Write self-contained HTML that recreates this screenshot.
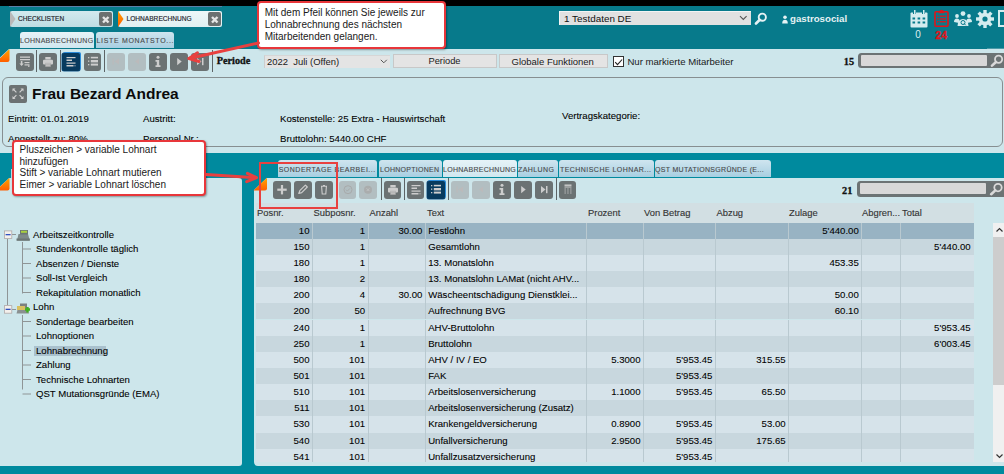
<!DOCTYPE html>
<html><head><meta charset="utf-8">
<style>
*{box-sizing:border-box;margin:0;padding:0}
html,body{width:1004px;height:474px;overflow:hidden;background:#cde6eb;font-family:"Liberation Sans",sans-serif;color:#111}
.a{position:absolute}
.t{position:absolute;white-space:nowrap;line-height:1}
.tab{position:absolute;top:11px;height:16px;background:linear-gradient(#d3eaee,#bedde3);border-radius:2px}
.subtab{position:absolute;height:16.5px;border-radius:3px 3px 0 0;background:linear-gradient(#cfe5ef,#a8cfe1);color:#4a4a4a;-webkit-text-stroke:.12px #4a4a4a;font-size:7px;letter-spacing:.3px;line-height:16px;padding-top:1px;white-space:nowrap;overflow:hidden}
.btn{position:absolute;width:17.7px;height:17.6px;border-radius:3px;background:#6b7273}
.btn.dis{background:#b2bec1}
.btn.act{background:#073a5e;box-shadow:1px -1px 0 0 #2a8ad8,0 0 0 .5px #1a5a90;border-radius:2px}
.sep{position:absolute;width:1.2px;background:#5d6466}
.th{position:absolute;top:207.2px;font-size:9.4px;color:#333;-webkit-text-stroke:.12px #333}
.row{position:absolute;left:256px;width:717.6px}
.vl{position:absolute;top:0;bottom:0;width:1px;background:#b9c9d0}
.c{position:absolute;top:0;line-height:16.15px;font-size:9.6px;white-space:nowrap;color:#000;-webkit-text-stroke:.08px #000}
.ti{font-size:9.6px;color:#000;-webkit-text-stroke:.08px #000}
.hi{-webkit-text-stroke:.08px #000;color:#000}
.cls{position:absolute;top:12px;width:13.5px;height:13.5px;border-radius:2px;background:#6b7070}
</style></head><body>

<div class="a" style="left:0;top:0;width:1004px;height:5.5px;background:#000"></div>
<div class="a" style="left:0;top:5.5px;width:1004px;height:43.5px;background:#077a8b"></div>
<div class="a" style="left:9px;top:5.5px;width:213px;height:1.5px;background:#5a7fa8"></div>

<!-- top tabs -->
<div class="tab" style="left:10px;width:103px"></div>
<svg class="a" style="left:10px;top:11px" width="6" height="16"><path d="M0 0 L5.5 8 L0 16z" fill="#b9b9b9"/></svg>
<div class="t" style="left:18px;top:16.3px;font-size:6.6px;color:#1e1e2a;-webkit-text-stroke:.15px #1e1e2a">CHECKLISTEN</div>
<div class="cls" style="left:98.7px"><svg width="13.5" height="13.5"><path d="M4 4l5.5 5.5M9.5 4L4 9.5" stroke="#e6e6e6" stroke-width="2.4"/></svg></div>
<div class="tab" style="left:118.4px;width:103.6px;background:linear-gradient(#eef7f8,#e0eff2)"></div>
<svg class="a" style="left:118.4px;top:11px" width="6" height="16"><defs><linearGradient id="ot" x1="0" y1="0" x2="0" y2="1"><stop offset="0" stop-color="#ffa000"/><stop offset="1" stop-color="#ff6000"/></linearGradient></defs><path d="M0 0 L5.5 8 L0 16z" fill="url(#ot)"/></svg>
<div class="t" style="left:126.5px;top:16.3px;font-size:6.6px;color:#1e1e2a;-webkit-text-stroke:.15px #1e1e2a">LOHNABRECHNUNG</div>
<div class="cls" style="left:207.8px"><svg width="13.5" height="13.5"><path d="M4 4l5.5 5.5M9.5 4L4 9.5" stroke="#e6e6e6" stroke-width="2.4"/></svg></div>

<!-- sub tabs -->
<div class="subtab" style="left:20px;top:31.6px;width:74.2px;background:linear-gradient(#e6f3f8,#d0e7ef)">LOHNABRECHNUNG</div>
<div class="subtab" style="left:96px;top:31.6px;width:78px;letter-spacing:.67px;padding-left:.5px">LISTE MONATSTO...</div>

<!-- top right -->
<div class="a" style="left:559.3px;top:10.7px;width:191.7px;height:14.5px;background:#e1e1e1;border-left:1px solid #f4f4f4;border-top:1px solid #f4f4f4"></div>
<div class="t" style="left:564px;top:14.2px;font-size:9.9px;color:#111">1 Testdaten DE</div>
<svg class="a" style="left:739px;top:15px" width="9" height="6"><path d="M1 1.2l3.3 3.3 3.3-3.3" fill="none" stroke="#555" stroke-width="1.1"/></svg>
<svg class="a" style="left:754px;top:11.5px" width="14" height="13"><circle cx="8.3" cy="5.2" r="3.6" fill="none" stroke="#e6f2f4" stroke-width="1.9"/><path d="M5.8 7.8L2 11.5" stroke="#e6f2f4" stroke-width="2.6" stroke-linecap="round"/></svg>
<svg class="a" style="left:781.5px;top:14.5px" width="6" height="9"><circle cx="3" cy="2.2" r="1.8" fill="#e6f2f4"/><path d="M0.2 8.5 Q0.2 4.8 3 4.8 Q5.8 4.8 5.8 8.5z" fill="#e6f2f4"/></svg>
<div class="t" style="left:790px;top:14.2px;font-size:9.7px;font-weight:bold;color:#e6f2f4">gastrosocial</div>
<!-- calendar -->
<svg class="a" style="left:909.5px;top:9.5px" width="18" height="18"><g fill="#d4ecef"><rect x="0.5" y="2.5" width="17" height="15" rx="1"/></g><g fill="#077a8b"><rect x="3" y="0" width="3" height="4"/><rect x="12" y="0" width="3" height="4"/><rect x="2.5" y="7.5" width="2.6" height="2"/><rect x="7.6" y="7.5" width="2.6" height="2"/><rect x="12.6" y="7.5" width="2.6" height="2"/><rect x="2.5" y="11.5" width="2.6" height="2"/><rect x="7.6" y="11.5" width="2.6" height="2"/><rect x="12.6" y="11.5" width="2.6" height="2"/></g><g fill="#d4ecef"><rect x="4" y="0" width="1.5" height="4.5"/><rect x="13" y="0" width="1.5" height="4.5"/></g></svg>
<div class="t" style="left:915.3px;top:30.2px;font-size:10px;color:#dceef0">0</div>
<!-- clipboard -->
<svg class="a" style="left:934px;top:9.3px" width="15" height="18"><g fill="none" stroke="#e0141a" stroke-width="1.6"><rect x="1" y="2.8" width="13" height="14.4" rx="1"/></g><path d="M4.5 4.2 L5.5 1.5 H9.5 L10.5 4.2z" fill="#e0141a"/><circle cx="7.5" cy="2" r="1.2" fill="#e0141a"/><g fill="#e0141a"><rect x="3" y="6.5" width="1.5" height="1.3"/><rect x="5.5" y="6.5" width="6.5" height="1.3"/><rect x="3" y="9.3" width="1.5" height="1.3"/><rect x="5.5" y="9.3" width="6.5" height="1.3"/><rect x="3" y="12.1" width="1.5" height="1.3"/><rect x="5.5" y="12.1" width="6.5" height="1.3"/></g></svg>
<div class="t" style="left:935.3px;top:29.8px;font-size:10.5px;font-weight:bold;color:#e0141a;-webkit-text-stroke:.3px #e0141a">24</div>
<!-- group -->
<svg class="a" style="left:953.5px;top:11px" width="18" height="16"><g fill="#d4ecef"><circle cx="9" cy="2.6" r="2.4"/><circle cx="3" cy="5" r="1.9"/><circle cx="15" cy="5" r="1.9"/><path d="M0 11 Q0 7.5 3 7.5 Q5 7.5 5.5 9 L5 12z"/><path d="M18 11 Q18 7.5 15 7.5 Q13 7.5 12.5 9 L13 12z"/><path d="M3.5 15 Q4 8 9 8 Q14 8 14.5 15z"/></g><circle cx="9" cy="11.5" r="2" fill="none" stroke="#077a8b" stroke-width="1"/><path d="M10.3 12.8l1.5 1.5" stroke="#077a8b" stroke-width="1"/></svg>
<!-- gear -->
<svg class="a" style="left:976px;top:9.5px" width="18" height="18" viewBox="0 0 18 18"><g fill="#d4ecef"><circle cx="9" cy="9" r="6.3"/><g transform="rotate(0 9 9)"><rect x="7.3" y="0" width="3.4" height="4"/><rect x="7.3" y="14" width="3.4" height="4"/></g><g transform="rotate(45 9 9)"><rect x="7.3" y="0" width="3.4" height="4"/><rect x="7.3" y="14" width="3.4" height="4"/></g><g transform="rotate(90 9 9)"><rect x="7.3" y="0" width="3.4" height="4"/><rect x="7.3" y="14" width="3.4" height="4"/></g><g transform="rotate(135 9 9)"><rect x="7.3" y="0" width="3.4" height="4"/><rect x="7.3" y="14" width="3.4" height="4"/></g></g><circle cx="9" cy="9" r="2.6" fill="#077a8b"/></svg>
<!-- exit partial -->
<svg class="a" style="left:997.5px;top:10px" width="7" height="17"><rect x="1" y="1" width="10" height="15" fill="none" stroke="#d4ecef" stroke-width="2"/></svg>
<!-- light area -->
<div class="a" style="left:0;top:49px;width:1004px;height:425px;background:#cde6eb"></div>
<div class="a" style="left:987px;top:48px;width:17px;height:1px;background:#4a9aa8"></div>
<svg class="a" style="left:0;top:48px" width="12" height="16" viewBox="0 48 12 16">
<defs><linearGradient id="og" x1="0" y1="0" x2="0" y2="1"><stop offset="0" stop-color="#ffa600"/><stop offset="1" stop-color="#ff5e00"/></linearGradient></defs>
<path d="M0 48.5 H9.5 L0 57.5z" fill="#077a8b"/>
<path d="M-4 62 L9.5 49 L9.5 60 Q9.5 62 7.5 62 Z" fill="url(#og)"/>
</svg>

<div class="btn " style="left:16px;top:53px"><svg width="18" height="17" viewBox="0 0 18 17" style="position:absolute;left:0;top:0"><g fill="#cdcdcd"><rect x="4" y="3.5" width="10" height="1.3"/><rect x="4" y="6" width="10" height="1.3"/><rect x="4.8" y="8" width="1.6" height="3"/><path d="M3.4 10.5h4.4L5.6 13z"/><rect x="8.5" y="9" width="5" height="1.2"/><rect x="8.5" y="11.3" width="5" height="1.2"/><rect x="12" y="12.5" width="1.5" height="1.3"/></g></svg></div>
<div class="sep" style="left:36.2px;top:49.5px;height:22px"></div>
<div class="btn " style="left:39px;top:53px"><svg width="18" height="17" viewBox="0 0 18 17" style="position:absolute;left:0;top:0"><g fill="#cdcdcd"><rect x="6.3" y="4" width="5.4" height="2.5"/><rect x="4" y="6.8" width="10" height="4.6" rx="1"/><rect x="6.3" y="9.8" width="5.4" height="4" fill="#b0b0b0"/><rect x="6.9" y="10.6" width="4.2" height=".6" fill="#cdcdcd"/><rect x="6.9" y="11.9" width="4.2" height=".6" fill="#cdcdcd"/></g></svg></div>
<div class="sep" style="left:59.5px;top:49.5px;height:22px"></div>
<div class="btn act" style="left:62px;top:53px"><svg width="18" height="17" viewBox="0 0 18 17" style="position:absolute;left:0;top:0"><g fill="#cdcdcd"><rect x="4.5" y="4" width="9" height="1.2"/><rect x="4.5" y="6.5" width="5.5" height="1.5"/><rect x="4.5" y="9.5" width="9" height="1.2"/><rect x="4.5" y="12" width="7" height="1.5"/><rect x="12.5" y="12.3" width="1" height="1"/></g></svg></div>
<div class="btn " style="left:83.5px;top:53px"><svg width="18" height="17" viewBox="0 0 18 17" style="position:absolute;left:0;top:0"><g fill="#cdcdcd"><rect x="4" y="4" width="1.3" height="1.3"/><rect x="6.8" y="3.8" width="7.2" height="1.6"/><rect x="4" y="7.5" width="1.3" height="1.3"/><rect x="6.8" y="7" width="7.2" height="2.4"/><rect x="4" y="11" width="1.3" height="1.3"/><rect x="6.8" y="10.6" width="7.2" height="2"/></g></svg></div>
<div class="sep" style="left:104px;top:49.5px;height:22px"></div>
<div class="btn dis" style="left:107px;top:53px"><svg width="18" height="17" viewBox="0 0 18 17" style="position:absolute;left:0;top:0"><g fill="#c2b8b8" opacity=".6"><rect x="5.5" y="5.5" width="1.2" height="6"/><path d="M12 5.5v6L7.5 8.5z"/></g></svg></div>
<div class="btn dis" style="left:128px;top:53px"><svg width="18" height="17" viewBox="0 0 18 17" style="position:absolute;left:0;top:0"><g fill="#c2b8b8" opacity=".6"><path d="M11 5.5v6L7 8.5z"/></g></svg></div>
<div class="btn " style="left:149px;top:53px"><svg width="18" height="17" viewBox="0 0 18 17" style="position:absolute;left:0;top:0"><g fill="#cdcdcd"><circle cx="9" cy="4.3" r="1.5"/><path d="M6.5 7h3.7v5.2h1.3v1.8h-5v-1.8h1.3v-3.4h-1.3z"/></g></svg></div>
<div class="btn " style="left:170px;top:53px"><svg width="18" height="17" viewBox="0 0 18 17" style="position:absolute;left:0;top:0"><g fill="#cdcdcd"><path d="M7.2 5v7.2l4.5-3.6z"/></g></svg></div>
<div class="btn " style="left:191px;top:53px"><svg width="18" height="17" viewBox="0 0 18 17" style="position:absolute;left:0;top:0"><g fill="#cdcdcd"><path d="M6 5v7.2l4.5-3.6z"/><rect x="11" y="5" width="1.5" height="7.2"/></g></svg></div>
<div class="sep" style="left:211.5px;top:49.5px;height:22.5px"></div>
<div class="t" style="left:216.8px;top:56.3px;font-size:10.2px;font-weight:bold;font-family:'Liberation Serif',serif;color:#111;-webkit-text-stroke:.3px #111">Periode</div>

<div class="a" style="left:263.5px;top:54.5px;width:126.3px;height:13.7px;background:#e4e4e4;border-left:1px solid #cdcdcd;border-top:1px solid #d6d6d6"></div>
<div class="t" style="left:267px;top:57.3px;font-size:9.45px;color:#1a1a1a">2022&nbsp; Juli (Offen)</div>
<svg class="a" style="left:380px;top:59px" width="8" height="5"><path d="M.8 .8l3 3 3-3" fill="none" stroke="#555" stroke-width="1"/></svg>
<div class="a" style="left:393px;top:53.6px;width:103.5px;height:14.6px;background:#e4e4e4;border:1px solid #c8c8c8"></div>
<div class="t" style="left:428.5px;top:57.3px;font-size:9.3px;color:#1a1a1a">Periode</div>
<div class="a" style="left:498.5px;top:53.6px;width:109.4px;height:14.6px;background:#e4e4e4;border:1px solid #c8c8c8"></div>
<div class="t" style="left:511.5px;top:57.3px;font-size:9.5px;color:#1a1a1a">Globale Funktionen</div>
<div class="a" style="left:612.7px;top:56.3px;width:11.2px;height:10.5px;background:#fff;border:1px solid #333"></div>
<svg class="a" style="left:613px;top:56.5px" width="11" height="10"><path d="M2.2 5.2l2.3 2.5 4.6-5.2" fill="none" stroke="#222" stroke-width="1.1"/></svg>
<div class="t" style="left:627.4px;top:57.3px;font-size:9.6px;color:#1a1a1a">Nur markierte Mitarbeiter</div>
<div class="t" style="left:843.8px;top:57.2px;font-size:10.3px;font-weight:bold;font-family:'Liberation Serif',serif;color:#111;-webkit-text-stroke:.3px #111">15</div>
<div class="a" style="left:857.7px;top:52.8px;width:150px;height:15.6px;background:#6c7374;border-radius:3.5px"></div>
<div class="a" style="left:861px;top:55.3px;width:126px;height:10.6px;background:#d8d8d8;border-radius:1px"></div>
<svg class="a" style="left:989px;top:54px" width="15" height="13"><circle cx="9.6" cy="5.3" r="3.6" fill="none" stroke="#d9d9d9" stroke-width="1.8"/><path d="M7 8L3 11.6" stroke="#d9d9d9" stroke-width="2.6" stroke-linecap="round"/></svg>

<!-- header panel -->
<div class="a" style="left:2px;top:76.9px;width:1000.5px;height:70.5px;border:1px solid #878f91;border-radius:6px"></div>
<div class="a" style="left:9px;top:85px;width:18px;height:17.5px;background:#6c7273;border-radius:2px"></div>
<svg class="a" style="left:9px;top:85px" width="18" height="18"><g stroke="#d0d0d0" stroke-width="1.2" fill="none"><path d="M4.2 4.2l3.2 3.2M13.8 4.2l-3.2 3.2M4.2 13.3l3.2-3.2M13.8 13.3l-3.2-3.2"/></g><g fill="#d0d0d0"><path d="M3.5 3.5h3l-3 3z"/><path d="M14.5 3.5h-3l3 3z"/><path d="M3.5 14h3l-3-3z"/><path d="M14.5 14h-3l3-3z"/></g></svg>
<div class="t" style="left:32px;top:86.4px;font-size:15.5px;font-weight:bold;color:#0a0a0a">Frau Bezard Andrea</div>
<div class="t hi" style="left:8px;top:113.8px;font-size:9.65px">Eintritt: 01.01.2019</div>
<div class="t hi" style="left:143px;top:113.8px;font-size:9.65px">Austritt:</div>
<div class="t hi" style="left:280px;top:113.8px;font-size:9.65px">Kostenstelle: 25 Extra - Hauswirtschaft</div>
<div class="t hi" style="left:562px;top:110.6px;font-size:9.65px">Vertragskategorie:</div>
<div class="t hi" style="left:8px;top:133.6px;font-size:9.65px">Angestellt zu: 80%</div>
<div class="t hi" style="left:143px;top:133.6px;font-size:9.65px">Personal Nr.:</div>
<div class="t hi" style="left:280px;top:133.8px;font-size:9.65px">Bruttolohn: 5440.00 CHF</div>

<!-- lower teal -->
<div class="a" style="left:0;top:152.8px;width:1004px;height:322px;background:#008a9e"></div>
<!-- left tab stub -->
<div class="a" style="left:11px;top:169.3px;width:20px;height:8.5px;background:#b9dbe6"></div>
<!-- left tree panel -->
<div class="a" style="left:0;top:178px;width:242.3px;height:288.3px;background:#cde6eb;border-radius:0 3px 3px 0"></div>
<!-- right panel -->
<div class="a" style="left:253.5px;top:177.7px;width:751px;height:288.8px;background:#cde6eb;border-radius:0 0 0 4px"></div>
<svg class="a" style="left:0;top:176px" width="270" height="16" viewBox="0 176 270 16">
<defs><linearGradient id="og3" x1="0" y1="0" x2="0" y2="1"><stop offset="0" stop-color="#ffa600"/><stop offset="1" stop-color="#ff5e00"/></linearGradient></defs>
<path d="M0 177.7 H9.5 L0 186.5z" fill="#008a9e"/>
<path d="M-4 190.5 L9.5 177.7 L9.5 188.5 Q9.5 190.5 7.5 190.5 Z" fill="url(#og3)"/>
<path d="M253.5 177.7 H267 L253.5 190.5z" fill="#008a9e"/>
<path d="M253.5 190.5 L267 177.7 L267 188.5 Q267 190.5 265 190.5 Z" fill="url(#og3)"/>
</svg>

<!-- lower tabs -->
<div class="subtab" style="left:277.7px;top:160.4px;padding-top:2px;width:99.7px;letter-spacing:.5px;padding-left:1px">SONDERTAGE BEARBEI...</div>
<div class="subtab" style="left:379px;top:160.4px;padding-top:2px;width:63px;letter-spacing:.27px;padding-left:1px">LOHNOPTIONEN</div>
<div class="subtab" style="left:443px;top:160.4px;padding-top:2px;width:74px;letter-spacing:.27px;background:linear-gradient(#e6f3f8,#d0e7ef)">LOHNABRECHNUNG</div>
<div class="subtab" style="left:518px;top:160.4px;padding-top:2px;width:40px;letter-spacing:.4px">ZAHLUNG</div>
<div class="subtab" style="left:559px;top:160.4px;padding-top:2px;width:95px;letter-spacing:.45px;padding-left:1px">TECHNISCHE LOHNAR...</div>
<div class="subtab" style="left:655px;top:160.4px;padding-top:2px;width:116px;letter-spacing:.3px">QST MUTATIONSGRÜNDE (E...</div>

<div class="btn " style="left:273.3px;top:181px"><svg width="18" height="17" viewBox="0 0 18 17" style="position:absolute;left:0;top:0"><g fill="#cdcdcd"><rect x="4.3" y="7.6" width="9.4" height="2.2"/><rect x="7.9" y="4" width="2.2" height="9.4"/></g></svg></div>
<div class="btn " style="left:294.2px;top:181px"><svg width="18" height="17" viewBox="0 0 18 17" style="position:absolute;left:0;top:0"><g fill="none" stroke="#cdcdcd" stroke-width="1.2" stroke-linejoin="round"><path d="M4.8 12.5l1-2.8 5.6-5.6 1.9 1.9-5.6 5.6z"/></g></svg></div>
<div class="btn " style="left:315.2px;top:181px"><svg width="18" height="17" viewBox="0 0 18 17" style="position:absolute;left:0;top:0"><g fill="none" stroke="#cdcdcd" stroke-width="1.1"><path d="M6 5.2h6M6.6 5.4l.6 7.6h3.6l.6-7.6"/><path d="M8 4.5h2"/></g></svg></div>
<div class="sep" style="left:335.8px;top:178px;height:22px"></div>
<div class="btn dis" style="left:338.5px;top:181px"><svg width="18" height="17" viewBox="0 0 18 17" style="position:absolute;left:0;top:0"><g fill="none" stroke="#a6a6a6" stroke-width="1" opacity=".8"><circle cx="9" cy="8.7" r="4"/><path d="M7 8.7l1.4 1.4 2.4-2.6"/></g></svg></div>
<div class="btn dis" style="left:359.3px;top:181px"><svg width="18" height="17" viewBox="0 0 18 17" style="position:absolute;left:0;top:0"><g fill="none" stroke="#a6a6a6" stroke-width="1" opacity=".8"><circle cx="9" cy="8.7" r="4" fill="#a9a9a9" stroke="none"/><path d="M7.6 7.3l2.8 2.8M10.4 7.3l-2.8 2.8" stroke="#c4c4c4"/></g></svg></div>
<div class="sep" style="left:380.5px;top:178px;height:22px"></div>
<div class="btn " style="left:383.5px;top:181px"><svg width="18" height="17" viewBox="0 0 18 17" style="position:absolute;left:0;top:0"><g fill="#cdcdcd"><rect x="6.3" y="4" width="5.4" height="2.5"/><rect x="4" y="6.8" width="10" height="4.6" rx="1"/><rect x="6.3" y="9.8" width="5.4" height="4" fill="#b0b0b0"/><rect x="6.9" y="10.6" width="4.2" height=".6" fill="#cdcdcd"/><rect x="6.9" y="11.9" width="4.2" height=".6" fill="#cdcdcd"/></g></svg></div>
<div class="sep" style="left:403.6px;top:178px;height:22px"></div>
<div class="btn " style="left:406.7px;top:181px"><svg width="18" height="17" viewBox="0 0 18 17" style="position:absolute;left:0;top:0"><g fill="#cdcdcd"><rect x="4.5" y="4" width="9" height="1.2"/><rect x="4.5" y="6.5" width="5.5" height="1.5"/><rect x="4.5" y="9.5" width="9" height="1.2"/><rect x="4.5" y="12" width="7" height="1.5"/><rect x="12.5" y="12.3" width="1" height="1"/></g></svg></div>
<div class="btn act" style="left:427.2px;top:181px"><svg width="18" height="17" viewBox="0 0 18 17" style="position:absolute;left:0;top:0"><g fill="#cdcdcd"><rect x="4" y="4" width="1.3" height="1.3"/><rect x="6.8" y="3.8" width="7.2" height="1.6"/><rect x="4" y="7.5" width="1.3" height="1.3"/><rect x="6.8" y="7" width="7.2" height="2.4"/><rect x="4" y="11" width="1.3" height="1.3"/><rect x="6.8" y="10.6" width="7.2" height="2"/></g></svg></div>
<div class="sep" style="left:447.5px;top:178px;height:22px"></div>
<div class="btn dis" style="left:451px;top:181px"><svg width="18" height="17" viewBox="0 0 18 17" style="position:absolute;left:0;top:0"><g fill="#c2b8b8" opacity=".6"><rect x="5.5" y="5.5" width="1.2" height="6"/><path d="M12 5.5v6L7.5 8.5z"/></g></svg></div>
<div class="btn dis" style="left:472px;top:181px"><svg width="18" height="17" viewBox="0 0 18 17" style="position:absolute;left:0;top:0"><g fill="#c2b8b8" opacity=".6"><path d="M11 5.5v6L7 8.5z"/></g></svg></div>
<div class="btn " style="left:493px;top:181px"><svg width="18" height="17" viewBox="0 0 18 17" style="position:absolute;left:0;top:0"><g fill="#cdcdcd"><circle cx="9" cy="4.3" r="1.5"/><path d="M6.5 7h3.7v5.2h1.3v1.8h-5v-1.8h1.3v-3.4h-1.3z"/></g></svg></div>
<div class="btn " style="left:514px;top:181px"><svg width="18" height="17" viewBox="0 0 18 17" style="position:absolute;left:0;top:0"><g fill="#cdcdcd"><path d="M7.2 5v7.2l4.5-3.6z"/></g></svg></div>
<div class="btn " style="left:535px;top:181px"><svg width="18" height="17" viewBox="0 0 18 17" style="position:absolute;left:0;top:0"><g fill="#cdcdcd"><path d="M6 5v7.2l4.5-3.6z"/><rect x="11" y="5" width="1.5" height="7.2"/></g></svg></div>
<div class="sep" style="left:555.5px;top:178px;height:22px"></div>
<div class="btn " style="left:558.5px;top:181px"><svg width="18" height="17" viewBox="0 0 18 17" style="position:absolute;left:0;top:0"><g fill="#cdcdcd"><rect x="5.5" y="3.5" width="7" height="1.4"/><rect x="5.5" y="5.5" width="7" height="1"/><g opacity=".9"><rect x="5.5" y="7.5" width="1.3" height="1"/><rect x="8.3" y="7.5" width="1.3" height="1"/><rect x="11.2" y="7.5" width="1.3" height="1"/><rect x="5.5" y="9.5" width="1.3" height="1"/><rect x="8.3" y="9.5" width="1.3" height="1"/><rect x="11.2" y="9.5" width="1.3" height="1"/><rect x="5.5" y="11.5" width="1.3" height="1"/><rect x="8.3" y="11.5" width="1.3" height="1"/><rect x="11.2" y="11.5" width="1.3" height="1"/></g></g></svg></div>
<div class="t" style="left:842px;top:185.6px;font-size:10.3px;font-weight:bold;font-family:'Liberation Serif',serif;color:#111;-webkit-text-stroke:.3px #111">21</div>
<div class="a" style="left:856.6px;top:180.8px;width:150px;height:16.2px;background:#6c7374;border-radius:3.5px"></div>
<div class="a" style="left:860px;top:183.3px;width:125.5px;height:11px;background:#d8d8d8;border-radius:1px"></div>
<svg class="a" style="left:988px;top:182px" width="16" height="14"><circle cx="10" cy="5.6" r="3.7" fill="none" stroke="#d9d9d9" stroke-width="1.8"/><path d="M7.3 8.4L3.2 12.2" stroke="#d9d9d9" stroke-width="2.6" stroke-linecap="round"/></svg>

<!-- scrollbar -->
<div class="a" style="left:993px;top:223px;width:11px;height:238.5px;background:#f0f0f0"></div>
<div class="a" style="left:993px;top:237px;width:11px;height:148px;background:#cdcdcd"></div>
<svg class="a" style="left:993px;top:226px" width="11" height="8"><path d="M3.5 5.5l3-3 3 3" fill="none" stroke="#333" stroke-width="1.2"/></svg>
<svg class="a" style="left:993px;top:452px" width="11" height="8"><path d="M3.5 2.5l3 3 3-3" fill="none" stroke="#333" stroke-width="1.2"/></svg>

<!-- tree -->
<svg class="a" style="left:0;top:225px" width="40" height="180" viewBox="0 225 40 180">
<g stroke="#8f9596" stroke-width="1" fill="none">
<path d="M7.5 239 V305"/>
<path d="M12 234.5 H16"/>
<path d="M12 309.5 H16"/>
<path d="M22.5 242 V293.5"/>
<path d="M22.5 249 H31"/><path d="M22.5 263.5 H31"/><path d="M22.5 278 H31"/><path d="M22.5 292.5 H31"/>
<path d="M22.5 315 V389.5"/>
<path d="M22.5 321.5 H31"/><path d="M22.5 336 H31"/><path d="M22.5 350.5 H31"/><path d="M22.5 365 H31"/><path d="M22.5 379.5 H31"/><path d="M22.5 394 H31"/>
</g>
<g>
<rect x="4.4" y="230.9" width="7.4" height="7.6" fill="#f4f0ec" stroke="#b0a8a8" stroke-width=".8"/>
<rect x="5.6" y="234" width="5" height="1.3" fill="#3050c0"/>
<rect x="4.4" y="305.6" width="7.4" height="7.6" fill="#f4f0ec" stroke="#b0a8a8" stroke-width=".8"/>
<rect x="5.6" y="308.7" width="5" height="1.3" fill="#3050c0"/>
</g>
<!-- register icon -->
<g>
<path d="M17 240.5 L18.5 234 H28 L29.8 240.5z" fill="#7d8a8a"/>
<rect x="16.5" y="238.5" width="13.3" height="2.2" fill="#6c7676"/>
<rect x="20" y="230" width="8" height="4.5" fill="#6c7676"/>
<rect x="21" y="230.8" width="6" height="2" fill="#a8d040"/>
</g>
<!-- lohn icon -->
<g>
<rect x="20" y="303.5" width="7" height="5" fill="#7b8080"/>
<path d="M16.5 313.5 L18 308 H27 L29 313.5z" fill="#8a9090"/>
<rect x="17" y="306" width="8" height="4" fill="#d8c060"/>
<path d="M25 309.5h5M27.5 307v5.5" stroke="#40b020" stroke-width="2.4"/>
</g>
</svg>
<div class="t ti" style="left:33px;top:229.8px">Arbeitszeitkontrolle</div>
<div class="t ti" style="left:36px;top:244.3px">Stundenkontrolle täglich</div>
<div class="t ti" style="left:36px;top:258.8px">Absenzen / Dienste</div>
<div class="t ti" style="left:36px;top:273.3px">Soll-Ist Vergleich</div>
<div class="t ti" style="left:36px;top:287.8px">Rekapitulation monatlich</div>
<div class="t ti" style="left:33px;top:302.3px">Lohn</div>
<div class="t ti" style="left:36px;top:316.8px">Sondertage bearbeiten</div>
<div class="t ti" style="left:36px;top:331.3px">Lohnoptionen</div>
<div class="a" style="left:34px;top:345.8px;width:72.3px;height:10.5px;background:#a9c1cd"></div>
<div class="t ti" style="left:36px;top:345.8px">Lohnabrechnung</div>
<div class="t ti" style="left:36px;top:360.3px">Zahlung</div>
<div class="t ti" style="left:36px;top:374.8px">Technische Lohnarten</div>
<div class="t ti" style="left:36px;top:389.3px">QST Mutationsgründe (EMA)</div>

<!-- TABLE -->
<div class="a" style="left:256px;top:203px;width:717.6px;height:19.6px;background:#d2dfe3"></div>
<div class="th" style="left:257px">Posnr.</div>
<div class="th" style="left:313.5px">Subposnr.</div>
<div class="th" style="left:369.5px">Anzahl</div>
<div class="th" style="left:427px">Text</div>
<div class="th" style="left:588px">Prozent</div>
<div class="th" style="left:644px">Von Betrag</div>
<div class="th" style="left:716.5px">Abzug</div>
<div class="th" style="left:789px">Zulage</div>
<div class="th" style="left:862px">Abgren...</div>
<div class="th" style="left:902px">Total</div>
<div class="row" style="top:222.60px;height:16.15px;background:#98b3c3">
<i class="vl" style="left:56.0px"></i>
<span class="c" style="left:0px;width:53.5px;text-align:right">10</span>
<i class="vl" style="left:111.6px"></i>
<span class="c" style="left:56.5px;width:52.6px;text-align:right">1</span>
<i class="vl" style="left:168.9px"></i>
<span class="c" style="left:112.10000000000002px;width:54.3px;text-align:right">30.00</span>
<i class="vl" style="left:329.8px"></i>
<span class="c" style="left:172.2px">Festlohn</span>
<i class="vl" style="left:387.0px"></i>
<i class="vl" style="left:458.9px"></i>
<i class="vl" style="left:532.1px"></i>
<i class="vl" style="left:605.3px"></i>
<span class="c" style="left:532.6px;width:70.2px;text-align:right">5'440.00</span>
<i class="vl" style="left:644.1px"></i>
</div>
<div class="row" style="top:238.75px;height:16.15px;background:#c8d7de">
<i class="vl" style="left:56.0px"></i>
<span class="c" style="left:0px;width:53.5px;text-align:right">150</span>
<i class="vl" style="left:111.6px"></i>
<span class="c" style="left:56.5px;width:52.6px;text-align:right">1</span>
<i class="vl" style="left:168.9px"></i>
<i class="vl" style="left:329.8px"></i>
<span class="c" style="left:172.2px">Gesamtlohn</span>
<i class="vl" style="left:387.0px"></i>
<i class="vl" style="left:458.9px"></i>
<i class="vl" style="left:532.1px"></i>
<i class="vl" style="left:605.3px"></i>
<i class="vl" style="left:644.1px"></i>
<span class="c" style="left:644.6px;width:70.0px;text-align:right">5'440.00</span>
</div>
<div class="row" style="top:254.90px;height:16.15px;background:#d6e3ea">
<i class="vl" style="left:56.0px"></i>
<span class="c" style="left:0px;width:53.5px;text-align:right">180</span>
<i class="vl" style="left:111.6px"></i>
<span class="c" style="left:56.5px;width:52.6px;text-align:right">1</span>
<i class="vl" style="left:168.9px"></i>
<i class="vl" style="left:329.8px"></i>
<span class="c" style="left:172.2px">13. Monatslohn</span>
<i class="vl" style="left:387.0px"></i>
<i class="vl" style="left:458.9px"></i>
<i class="vl" style="left:532.1px"></i>
<i class="vl" style="left:605.3px"></i>
<span class="c" style="left:532.6px;width:70.2px;text-align:right">453.35</span>
<i class="vl" style="left:644.1px"></i>
</div>
<div class="row" style="top:271.05px;height:16.15px;background:#c8d7de">
<i class="vl" style="left:56.0px"></i>
<span class="c" style="left:0px;width:53.5px;text-align:right">180</span>
<i class="vl" style="left:111.6px"></i>
<span class="c" style="left:56.5px;width:52.6px;text-align:right">2</span>
<i class="vl" style="left:168.9px"></i>
<i class="vl" style="left:329.8px"></i>
<span class="c" style="left:172.2px">13. Monatslohn LAMat (nicht AHV...</span>
<i class="vl" style="left:387.0px"></i>
<i class="vl" style="left:458.9px"></i>
<i class="vl" style="left:532.1px"></i>
<i class="vl" style="left:605.3px"></i>
<i class="vl" style="left:644.1px"></i>
</div>
<div class="row" style="top:287.20px;height:16.15px;background:#d6e3ea">
<i class="vl" style="left:56.0px"></i>
<span class="c" style="left:0px;width:53.5px;text-align:right">200</span>
<i class="vl" style="left:111.6px"></i>
<span class="c" style="left:56.5px;width:52.6px;text-align:right">4</span>
<i class="vl" style="left:168.9px"></i>
<span class="c" style="left:112.10000000000002px;width:54.3px;text-align:right">30.00</span>
<i class="vl" style="left:329.8px"></i>
<span class="c" style="left:172.2px">Wäscheentschädigung Dienstklei...</span>
<i class="vl" style="left:387.0px"></i>
<i class="vl" style="left:458.9px"></i>
<i class="vl" style="left:532.1px"></i>
<i class="vl" style="left:605.3px"></i>
<span class="c" style="left:532.6px;width:70.2px;text-align:right">50.00</span>
<i class="vl" style="left:644.1px"></i>
</div>
<div class="row" style="top:303.35px;height:16.15px;background:#c8d7de">
<i class="vl" style="left:56.0px"></i>
<span class="c" style="left:0px;width:53.5px;text-align:right">200</span>
<i class="vl" style="left:111.6px"></i>
<span class="c" style="left:56.5px;width:52.6px;text-align:right">50</span>
<i class="vl" style="left:168.9px"></i>
<i class="vl" style="left:329.8px"></i>
<span class="c" style="left:172.2px">Aufrechnung BVG</span>
<i class="vl" style="left:387.0px"></i>
<i class="vl" style="left:458.9px"></i>
<i class="vl" style="left:532.1px"></i>
<i class="vl" style="left:605.3px"></i>
<span class="c" style="left:532.6px;width:70.2px;text-align:right">60.10</span>
<i class="vl" style="left:644.1px"></i>
</div>
<div class="row" style="top:319.50px;height:16.15px;background:#d6e3ea">
<i class="vl" style="left:56.0px"></i>
<span class="c" style="left:0px;width:53.5px;text-align:right">240</span>
<i class="vl" style="left:111.6px"></i>
<span class="c" style="left:56.5px;width:52.6px;text-align:right">1</span>
<i class="vl" style="left:168.9px"></i>
<i class="vl" style="left:329.8px"></i>
<span class="c" style="left:172.2px">AHV-Bruttolohn</span>
<i class="vl" style="left:387.0px"></i>
<i class="vl" style="left:458.9px"></i>
<i class="vl" style="left:532.1px"></i>
<i class="vl" style="left:605.3px"></i>
<i class="vl" style="left:644.1px"></i>
<span class="c" style="left:644.6px;width:70.0px;text-align:right">5'953.45</span>
</div>
<div class="row" style="top:335.65px;height:16.15px;background:#c8d7de">
<i class="vl" style="left:56.0px"></i>
<span class="c" style="left:0px;width:53.5px;text-align:right">250</span>
<i class="vl" style="left:111.6px"></i>
<span class="c" style="left:56.5px;width:52.6px;text-align:right">1</span>
<i class="vl" style="left:168.9px"></i>
<i class="vl" style="left:329.8px"></i>
<span class="c" style="left:172.2px">Bruttolohn</span>
<i class="vl" style="left:387.0px"></i>
<i class="vl" style="left:458.9px"></i>
<i class="vl" style="left:532.1px"></i>
<i class="vl" style="left:605.3px"></i>
<i class="vl" style="left:644.1px"></i>
<span class="c" style="left:644.6px;width:70.0px;text-align:right">6'003.45</span>
</div>
<div class="row" style="top:351.80px;height:16.15px;background:#d6e3ea">
<i class="vl" style="left:56.0px"></i>
<span class="c" style="left:0px;width:53.5px;text-align:right">500</span>
<i class="vl" style="left:111.6px"></i>
<span class="c" style="left:56.5px;width:52.6px;text-align:right">101</span>
<i class="vl" style="left:168.9px"></i>
<i class="vl" style="left:329.8px"></i>
<span class="c" style="left:172.2px">AHV / IV / EO</span>
<i class="vl" style="left:387.0px"></i>
<span class="c" style="left:330.29999999999995px;width:54.2px;text-align:right">5.3000</span>
<i class="vl" style="left:458.9px"></i>
<span class="c" style="left:387.5px;width:68.9px;text-align:right">5'953.45</span>
<i class="vl" style="left:532.1px"></i>
<span class="c" style="left:459.4px;width:70.2px;text-align:right">315.55</span>
<i class="vl" style="left:605.3px"></i>
<i class="vl" style="left:644.1px"></i>
</div>
<div class="row" style="top:367.95px;height:16.15px;background:#c8d7de">
<i class="vl" style="left:56.0px"></i>
<span class="c" style="left:0px;width:53.5px;text-align:right">501</span>
<i class="vl" style="left:111.6px"></i>
<span class="c" style="left:56.5px;width:52.6px;text-align:right">101</span>
<i class="vl" style="left:168.9px"></i>
<i class="vl" style="left:329.8px"></i>
<span class="c" style="left:172.2px">FAK</span>
<i class="vl" style="left:387.0px"></i>
<i class="vl" style="left:458.9px"></i>
<span class="c" style="left:387.5px;width:68.9px;text-align:right">5'953.45</span>
<i class="vl" style="left:532.1px"></i>
<i class="vl" style="left:605.3px"></i>
<i class="vl" style="left:644.1px"></i>
</div>
<div class="row" style="top:384.10px;height:16.15px;background:#d6e3ea">
<i class="vl" style="left:56.0px"></i>
<span class="c" style="left:0px;width:53.5px;text-align:right">510</span>
<i class="vl" style="left:111.6px"></i>
<span class="c" style="left:56.5px;width:52.6px;text-align:right">101</span>
<i class="vl" style="left:168.9px"></i>
<i class="vl" style="left:329.8px"></i>
<span class="c" style="left:172.2px">Arbeitslosenversicherung</span>
<i class="vl" style="left:387.0px"></i>
<span class="c" style="left:330.29999999999995px;width:54.2px;text-align:right">1.1000</span>
<i class="vl" style="left:458.9px"></i>
<span class="c" style="left:387.5px;width:68.9px;text-align:right">5'953.45</span>
<i class="vl" style="left:532.1px"></i>
<span class="c" style="left:459.4px;width:70.2px;text-align:right">65.50</span>
<i class="vl" style="left:605.3px"></i>
<i class="vl" style="left:644.1px"></i>
</div>
<div class="row" style="top:400.25px;height:16.15px;background:#c8d7de">
<i class="vl" style="left:56.0px"></i>
<span class="c" style="left:0px;width:53.5px;text-align:right">511</span>
<i class="vl" style="left:111.6px"></i>
<span class="c" style="left:56.5px;width:52.6px;text-align:right">101</span>
<i class="vl" style="left:168.9px"></i>
<i class="vl" style="left:329.8px"></i>
<span class="c" style="left:172.2px">Arbeitslosenversicherung (Zusatz)</span>
<i class="vl" style="left:387.0px"></i>
<i class="vl" style="left:458.9px"></i>
<i class="vl" style="left:532.1px"></i>
<i class="vl" style="left:605.3px"></i>
<i class="vl" style="left:644.1px"></i>
</div>
<div class="row" style="top:416.40px;height:16.15px;background:#d6e3ea">
<i class="vl" style="left:56.0px"></i>
<span class="c" style="left:0px;width:53.5px;text-align:right">530</span>
<i class="vl" style="left:111.6px"></i>
<span class="c" style="left:56.5px;width:52.6px;text-align:right">101</span>
<i class="vl" style="left:168.9px"></i>
<i class="vl" style="left:329.8px"></i>
<span class="c" style="left:172.2px">Krankengeldversicherung</span>
<i class="vl" style="left:387.0px"></i>
<span class="c" style="left:330.29999999999995px;width:54.2px;text-align:right">0.8900</span>
<i class="vl" style="left:458.9px"></i>
<span class="c" style="left:387.5px;width:68.9px;text-align:right">5'953.45</span>
<i class="vl" style="left:532.1px"></i>
<span class="c" style="left:459.4px;width:70.2px;text-align:right">53.00</span>
<i class="vl" style="left:605.3px"></i>
<i class="vl" style="left:644.1px"></i>
</div>
<div class="row" style="top:432.55px;height:16.15px;background:#c8d7de">
<i class="vl" style="left:56.0px"></i>
<span class="c" style="left:0px;width:53.5px;text-align:right">540</span>
<i class="vl" style="left:111.6px"></i>
<span class="c" style="left:56.5px;width:52.6px;text-align:right">101</span>
<i class="vl" style="left:168.9px"></i>
<i class="vl" style="left:329.8px"></i>
<span class="c" style="left:172.2px">Unfallversicherung</span>
<i class="vl" style="left:387.0px"></i>
<span class="c" style="left:330.29999999999995px;width:54.2px;text-align:right">2.9500</span>
<i class="vl" style="left:458.9px"></i>
<span class="c" style="left:387.5px;width:68.9px;text-align:right">5'953.45</span>
<i class="vl" style="left:532.1px"></i>
<span class="c" style="left:459.4px;width:70.2px;text-align:right">175.65</span>
<i class="vl" style="left:605.3px"></i>
<i class="vl" style="left:644.1px"></i>
</div>
<div class="row" style="top:448.70px;height:13.30px;background:#d6e3ea">
<i class="vl" style="left:56.0px"></i>
<span class="c" style="left:0px;width:53.5px;text-align:right">541</span>
<i class="vl" style="left:111.6px"></i>
<span class="c" style="left:56.5px;width:52.6px;text-align:right">101</span>
<i class="vl" style="left:168.9px"></i>
<i class="vl" style="left:329.8px"></i>
<span class="c" style="left:172.2px">Unfallzusatzversicherung</span>
<i class="vl" style="left:387.0px"></i>
<i class="vl" style="left:458.9px"></i>
<span class="c" style="left:387.5px;width:68.9px;text-align:right">5'953.45</span>
<i class="vl" style="left:532.1px"></i>
<i class="vl" style="left:605.3px"></i>
<i class="vl" style="left:644.1px"></i>
</div>
<!-- red box -->
<div class="a" style="left:258.8px;top:162.4px;width:79px;height:46.6px;border:2px solid #e8413f"></div>

<!-- callout 1 -->
<div class="a" style="left:257.2px;top:0.6px;width:189.2px;height:48px;background:#fff;border:2.4px solid #e8363a;border-radius:4px;box-shadow:1px 1px 2px rgba(0,0,0,.35)"></div>
<div class="t" style="left:264.7px;top:7px;font-size:10px;line-height:12px;color:#1a1a1a;white-space:pre">Mit dem Pfeil können Sie jeweils zur
Lohnabrechnung des nächsten
Mitarbeitenden gelangen.</div>

<!-- callout 2 -->
<div class="a" style="left:12.2px;top:139.8px;width:193.8px;height:55.8px;background:#fff;border:2.2px solid #e8363a;border-radius:4px;box-shadow:1px 1px 2px rgba(0,0,0,.35)"></div>
<div class="t" style="left:19.5px;top:143.6px;font-size:10px;line-height:11.9px;color:#1a1a1a;white-space:pre">Pluszeichen &gt; variable Lohnart
hinzufügen
Stift &gt; variable Lohnart mutieren
Eimer &gt; variable Lohnart löschen</div>

<!-- arrows -->
<svg class="a" style="left:0;top:0" width="1004" height="474">
<g stroke="#e8403f" stroke-width="3" fill="none" stroke-linecap="round" stroke-linejoin="round">
<path d="M258.5 43 L189 58.5"/>
<path d="M197.5 52.8 L189 58.5 L199 61.5"/>
<path d="M206 174.4 L256 177.7"/>
<path d="M247.4 173.3 L256.5 177.7 L246.7 181.6"/>
</g>
</svg>

</body></html>
